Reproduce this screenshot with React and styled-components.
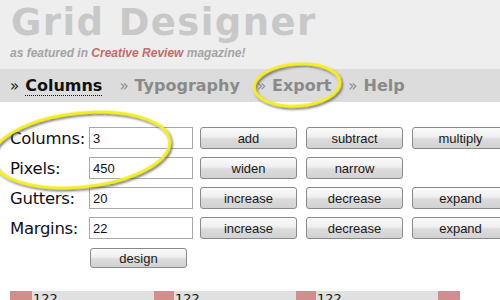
import React from "react"
import styled, { createGlobalStyle } from "styled-components"

const GlobalStyle = createGlobalStyle`
  html, body {
    margin: 0;
    padding: 0;
    background: #ffffff;
    overflow: hidden;
  }
  body {
    font-family: "DejaVu Sans", Verdana, sans-serif;
  }
`

const Page = styled.div`
  position: relative;
  width: 500px;
  height: 300px;
  overflow: hidden;
`

const Header = styled.header`
  height: 69px;
  box-sizing: border-box;
  padding: 4px 0 0 11px;
  background: #eeeeee;
`

const Title = styled.h1`
  margin: 0;
  font-family: "DejaVu Sans", Verdana, sans-serif;
  font-weight: bold;
  font-size: 37px;
  line-height: 37px;
  letter-spacing: 1.4px;
  color: #c8c8c8;
  white-space: nowrap;
`

const Tagline = styled.p`
  margin: 6px 0 0 -1px;
  font-family: "Liberation Sans", Arial, sans-serif;
  font-style: italic;
  font-weight: bold;
  font-size: 12px;
  line-height: 12px;
  color: #a4a4a4;

  em {
    color: #c66a6a;
  }
`

const Nav = styled.nav`
  display: flex;
  align-items: center;
  gap: 17px;
  height: 33px;
  padding-left: 10px;
  background: #dcdcdc;
`

const NavItem = styled.span`
  font-family: "DejaVu Sans", Verdana, sans-serif;
  font-weight: bold;
  font-size: 16px;
  color: ${p => (p.$active ? "#111111" : "#8a8a8a")};
  white-space: nowrap;

  b {
    font-weight: normal;
    font-size: 15px;
    margin-right: 6px;
  }

  span {
    border-bottom: ${p => (p.$active ? "1px dotted #111" : "none")};
  }
`

const Form = styled.div`
  display: flex;
  flex-direction: column;
  gap: 8px;
  padding: 25px 0 0 10px;
`

const Row = styled.div`
  display: flex;
  align-items: center;
  height: 22px;
`

const Label = styled.label`
  width: 79px;
  flex-shrink: 0;
  font-family: "DejaVu Sans", Verdana, sans-serif;
  font-size: 16.5px;
  letter-spacing: -0.3px;
  color: #10101c;
  white-space: nowrap;
`

const Input = styled.input`
  box-sizing: border-box;
  width: 104px;
  height: 22px;
  margin: 0;
  padding: 0 3px;
  border: 1px solid #a8a8a8;
  background: #ffffff;
  font-family: "Liberation Sans", Arial, sans-serif;
  font-size: 13px;
  color: #111;
  outline: none;
  flex-shrink: 0;
`

const Buttons = styled.div`
  display: flex;
  gap: 9px;
  margin-left: 7px;
`

const Button = styled.button`
  box-sizing: border-box;
  width: 97px;
  height: ${p => (p.$short ? "20px" : "22px")};
  margin: 0;
  padding: 0;
  border: 1px solid #8a8a8a;
  border-radius: 3px;
  background: linear-gradient(#fbfbfb 0%, #efefef 45%, #dcdcdc 55%, #d2d2d2 100%);
  font-family: "Liberation Sans", Arial, sans-serif;
  font-size: 13px;
  color: #1a1a1a;
  flex-shrink: 0;
`

const DesignRow = styled.div`
  display: flex;
  padding: 9px 0 0 90px;
`

const Preview = styled.div`
  display: flex;
  margin: 23px 0 0 10px;
  height: 20px;
`

const Gap = styled.div`
  width: ${p => p.$w}px;
  background: #d18e8e;
`

const Col = styled.div`
  width: ${p => p.$w}px;
  background: #e0e0e0;
  font-family: "DejaVu Sans", Verdana, sans-serif;
  font-size: 13px;
  line-height: 16px;
  padding-left: 1px;
  box-sizing: border-box;
  color: #111;
`

const Overlay = styled.svg`
  position: absolute;
  left: 0;
  top: 0;
  pointer-events: none;
`

const rows = [
  { label: "Columns:", value: "3", buttons: ["add", "subtract", "multiply"] },
  { label: "Pixels:", value: "450", buttons: ["widen", "narrow"] },
  { label: "Gutters:", value: "20", buttons: ["increase", "decrease", "expand"] },
  { label: "Margins:", value: "22", buttons: ["increase", "decrease", "expand"] },
]

const App = () => (
  <Page>
    <GlobalStyle />
    <Header>
      <Title>Grid Designer</Title>
      <Tagline>
        as featured in <em>Creative Review</em> magazine!
      </Tagline>
    </Header>
    <Nav>
      <NavItem $active><b>»</b><span>Columns</span></NavItem>
      <NavItem><b>»</b><span>Typography</span></NavItem>
      <NavItem><b>»</b><span>Export</span></NavItem>
      <NavItem><b>»</b><span>Help</span></NavItem>
    </Nav>
    <Form>
      {rows.map(r => (
        <Row key={r.label}>
          <Label>{r.label}</Label>
          <Input defaultValue={r.value} />
          <Buttons>
            {r.buttons.map(b => (
              <Button key={b}>{b}</Button>
            ))}
          </Buttons>
        </Row>
      ))}
    </Form>
    <DesignRow>
      <Button $short>design</Button>
    </DesignRow>
    <Preview>
      <Gap $w={22} />
      <Col $w={122}>122</Col>
      <Gap $w={20} />
      <Col $w={122}>122</Col>
      <Gap $w={20} />
      <Col $w={122}>122</Col>
      <Gap $w={22} />
    </Preview>
    <Overlay width="500" height="300" viewBox="0 0 500 300">
      <defs>
        <filter id="shade" x="-20%" y="-20%" width="140%" height="140%">
          <feDropShadow dx="1.5" dy="2" stdDeviation="1.2" floodColor="#555" floodOpacity="0.8" />
        </filter>
      </defs>
      <ellipse
        cx="297" cy="85" rx="43" ry="21"
        transform="rotate(-4 297 85)"
        fill="none" stroke="#f5f01a" strokeWidth="3" filter="url(#shade)"
      />
      <ellipse
        cx="81" cy="150" rx="89" ry="37"
        transform="rotate(-6 81 150)"
        fill="none" stroke="#f5f01a" strokeWidth="3" filter="url(#shade)"
      />
    </Overlay>
  </Page>
)

export default App
